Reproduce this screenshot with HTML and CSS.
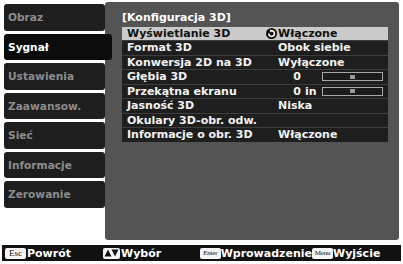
FILE: index.html
```html
<!DOCTYPE html>
<html lang="pl">
<head>
<meta charset="utf-8">
<title>Konfiguracja 3D</title>
<link rel="stylesheet" href="styles.css">
</head>
<body>
<div class="screen">
  <div class="main">
    <ul class="tabs">
      <li class="tab">Obraz</li>
      <li class="tab tab-active">Sygnał</li>
      <li class="tab">Ustawienia</li>
      <li class="tab">Zaawansow.</li>
      <li class="tab">Sieć</li>
      <li class="tab">Informacje</li>
      <li class="tab">Zerowanie</li>
    </ul>
    <section class="panel">
      <div class="title">[Konfiguracja 3D]</div>
      <ul class="rows">
        <li class="row row-sel">
          <span class="label">Wyświetlanie 3D</span>
          <span class="value">
            <svg class="cur" width="11" height="11" viewBox="0 0 11 11">
              <circle cx="5.5" cy="5.5" r="5.5" fill="#111"/>
              <path d="M2.8 5.6 A2.8 2.8 0 1 0 5.6 2.8" fill="none" stroke="#fff" stroke-width="1.5"/>
              <polygon points="4.2,1.2 7,2.8 4.2,4.6" fill="#fff"/>
            </svg>Włączone
          </span>
        </li>
        <li class="row"><span class="label">Format 3D</span><span class="value">Obok siebie</span></li>
        <li class="row"><span class="label">Konwersja 2D na 3D</span><span class="value">Wyłączone</span></li>
        <li class="row">
          <span class="label">Głębia 3D</span>
          <span class="value"><span class="num">0</span><span class="unit"></span><span class="slider"><span class="knob"></span></span></span>
        </li>
        <li class="row">
          <span class="label">Przekątna ekranu</span>
          <span class="value"><span class="num">0</span><span class="unit">in</span><span class="slider"><span class="knob"></span></span></span>
        </li>
        <li class="row"><span class="label">Jasność 3D</span><span class="value">Niska</span></li>
        <li class="row"><span class="label">Okulary 3D-obr. odw.</span><span class="value"></span></li>
        <li class="row"><span class="label">Informacje o obr. 3D</span><span class="value">Włączone</span></li>
      </ul>
    </section>
  </div>
  <div class="footer">
    <span class="hint hint-back"><span class="key">Esc</span>Powrót</span>
    <span class="hint hint-sel"><span class="key key-arrows"><svg width="15" height="8" viewBox="0 0 15 8"><polygon points="0.5,7.5 4,0.5 7.5,7.5" fill="#111"/><polygon points="7.5,0.5 14.5,0.5 11,7.5" fill="#111"/></svg></span>Wybór</span>
    <span class="hint hint-enter"><span class="key key-small">Enter</span>Wprowadzenie</span>
    <span class="hint"><span class="key key-small">Menu</span>Wyjście</span>
  </div>
</div>
</body>
</html>
```

FILE: styles.css
```css
* { box-sizing: border-box; }
html, body {
  margin: 0;
  padding: 0;
  background: #ffffff;
}
body {
  width: 403px;
  height: 264px;
  overflow: hidden;
  font-family: "DejaVu Sans", Verdana, sans-serif;
  font-weight: bold;
  font-size: 11px;
}
ul { list-style: none; margin: 0; padding: 0; }

.screen { padding-top: 2px; }

.main {
  display: flex;
  height: 238px;
  padding-left: 4px;
}

.tabs {
  width: 101px;
  flex: none;
  padding-top: 2px;
  display: flex;
  flex-direction: column;
  gap: 3px;
  font-size: 10.6px;
}
.tab {
  height: 26.5px;
  line-height: 26.5px;
  padding-left: 4px;
  background: #1e1e1e;
  color: #8c8c8c;
  border-radius: 3px;
}
.tab-active {
  width: 108px;
  background: #0c0c0c;
  color: #ffffff;
  position: relative;
  z-index: 2;
}

.panel {
  position: relative;
  z-index: 1;
  width: 294px;
  height: 238px;
  flex: none;
  background: #545454;
  border-radius: 3px;
  padding: 9px 0 0 17px;
}
.title {
  color: #ffffff;
  height: 15.5px;
  line-height: 14px;
}
.rows {
  width: 266px;
  display: flex;
  flex-direction: column;
  gap: 1px;
  background: #3e3e3e;
}
.row {
  display: flex;
  height: 13.5px;
  line-height: 13.5px;
  background: #1e1e1e;
  color: #f2f2f2;
}
.row-sel {
  background: #cacaca;
  color: #111111;
}
.label {
  width: 156px;
  padding-left: 5px;
  flex: none;
  white-space: nowrap;
}
.value {
  display: flex;
  align-items: center;
  white-space: nowrap;
}
.cur {
  margin-left: -12px;
  margin-right: 1px;
}
.num {
  width: 23px;
  text-align: right;
}
.unit {
  width: 21px;
  padding-left: 4px;
}
.slider {
  width: 61px;
  height: 9px;
  border: 1px solid #a8a8a8;
  background: #1a1a1a;
  display: flex;
  justify-content: center;
  align-items: center;
}
.knob {
  width: 5px;
  height: 4px;
  background: #9a9a9a;
}

.footer {
  margin: 5px 0 0 2px;
  width: 399px;
  height: 16px;
  background: #111111;
  color: #ffffff;
  display: flex;
  align-items: center;
  padding-left: 3px;
  white-space: nowrap;
}
.hint {
  display: flex;
  align-items: center;
  flex: none;
}
.hint-back { width: 98px; }
.hint-sel { width: 97px; }
.hint-enter { width: 112px; }
.key {
  display: inline-flex;
  align-items: center;
  justify-content: center;
  width: 21px;
  height: 11px;
  margin-right: 1px;
  background: #f4f4f4;
  color: #111;
  border-radius: 2px;
  font-family: "Liberation Serif", serif;
  font-size: 9px;
  font-weight: normal;
  line-height: 11px;
}
.key-arrows { width: 17px; }
.key-small { font-size: 7px; letter-spacing: -0.2px; margin-right: 0; }
```
